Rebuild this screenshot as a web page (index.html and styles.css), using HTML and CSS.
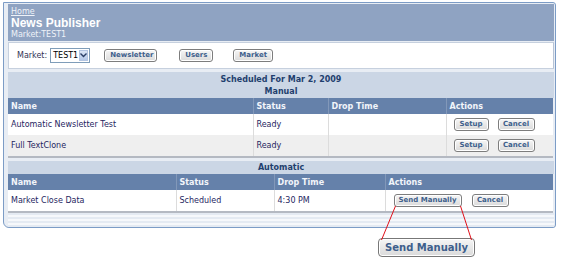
FILE: index.html
```html
<!DOCTYPE html>
<html lang="en">
<head>
  <meta charset="UTF-8">
  <meta name="viewport" content="width=device-width, initial-scale=1.0">
  <title>News Publisher</title>
  <link rel="stylesheet" href="styles.css">
</head>
<body>
  <div class="frame">
    <div class="masthead">
      <a class="home" href="#">Home</a>
      <div class="title">News Publisher</div>
      <div class="sub">Market:TEST1</div>
    </div>

    <div class="toolbar">
      <span class="label">Market:</span>
      <span class="select">
        <span class="select-value">TEST1</span>
        <span class="select-arrow">
          <svg width="7" height="5" viewBox="0 0 7 5"><path d="M0.5 0.5 L3.5 3.5 L6.5 0.5" fill="none" stroke="#2b3f66" stroke-width="1.4"/></svg>
        </span>
      </span>
      <button class="btn btn-newsletter">Newsletter</button>
      <button class="btn btn-users">Users</button>
      <button class="btn btn-market">Market</button>
    </div>

    <!-- manual drops -->
    <div class="block block-manual">
      <div class="block-head">
        <div>Scheduled For Mar 2, 2009</div>
        <div>Manual</div>
      </div>
      <table class="grid">
        <colgroup>
          <col style="width:245px"><col style="width:75px"><col style="width:118px"><col>
        </colgroup>
        <thead>
          <tr><th>Name</th><th>Status</th><th>Drop Time</th><th>Actions</th></tr>
        </thead>
        <tbody>
          <tr>
            <td>Automatic Newsletter Test</td>
            <td>Ready</td>
            <td></td>
            <td class="actions"><button class="btn">Setup</button><button class="btn btn-cancel">Cancel</button></td>
          </tr>
          <tr class="alt">
            <td>Full TextClone</td>
            <td>Ready</td>
            <td></td>
            <td class="actions"><button class="btn">Setup</button><button class="btn btn-cancel">Cancel</button></td>
          </tr>
        </tbody>
      </table>
    </div>

    <!-- automatic drops -->
    <div class="block block-auto">
      <div class="block-head">
        <div>Automatic</div>
      </div>
      <table class="grid">
        <colgroup>
          <col style="width:168px"><col style="width:98px"><col style="width:111px"><col>
        </colgroup>
        <thead>
          <tr><th>Name</th><th>Status</th><th>Drop Time</th><th>Actions</th></tr>
        </thead>
        <tbody>
          <tr>
            <td>Market Close Data</td>
            <td>Scheduled</td>
            <td>4:30 PM</td>
            <td class="actions"><button class="btn btn-send">Send Manually</button><button class="btn btn-cancel2">Cancel</button></td>
          </tr>
        </tbody>
      </table>
    </div>

    <div class="frame-foot"></div>
  </div>

  <div class="callout">
    <span class="btn btn-big">Send Manually</span>
  </div>

  <svg class="leader" width="561" height="260" viewBox="0 0 561 260">
    <line x1="395.5" y1="206" x2="381.5" y2="240" stroke="#e0101a" stroke-width="1"/>
    <line x1="460.5" y1="206" x2="471.5" y2="240" stroke="#e0101a" stroke-width="1"/>
  </svg>
</body>
</html>
```

FILE: styles.css
```css
body {
  margin: 0;
  padding: 0;
  background: #fff;
  font-family: "DejaVu Sans", Verdana, sans-serif;
  font-size: 8px;
  color: #262661;
  position: relative;
  width: 561px;
  height: 260px;
  overflow: hidden;
}
.frame {
  margin: 2px 0 0 3px;
  width: 546px;
  padding: 1px 1px 0 4px;
  border: 1px solid #7c9cc6;
  border-radius: 0 3px 3px 6px;
  background: #e8edf4;
}
.masthead {
  height: 37px;
  padding: 3px 3px 0 3px;
  box-sizing: border-box;
  background: #8fa3c2;
  color: #eef2f8;
}
.home {
  display: block;
  color: #eef2f8;
  text-decoration: underline;
  line-height: 9px;
}
.title {
  font-family: "Liberation Sans", Arial, sans-serif;
  font-weight: bold;
  font-size: 12px;
  color: #fff;
  line-height: 14px;
}
.sub {
  line-height: 10px;
}
.toolbar {
  display: flex;
  align-items: center;
  height: 25px;
  margin-top: 1px;
  padding-left: 8px;
  background: #fff;
  border: 1px solid #c6d0de;
  border-right-color: #b8c4d6;
}
.label {
  color: #333355;
}
.select {
  display: flex;
  align-items: stretch;
  margin-left: 3px;
  width: 40px;
  height: 15px;
  box-sizing: border-box;
  border: 1px solid #7f9db9;
  background: #fff;
}
.select-value {
  flex: 1;
  padding-left: 2px;
  line-height: 13px;
  color: #000;
}
.select-arrow {
  display: flex;
  align-items: center;
  justify-content: center;
  width: 11px;
  margin: 1px;
  background: linear-gradient(#dbe6f6, #b5c9e8);
  border: 1px solid #b3c5e2;
  box-sizing: border-box;
}
.btn {
  display: inline-block;
  font-family: "DejaVu Sans", Verdana, sans-serif;
  font-weight: bold;
  font-size: 7px;
  color: #3e5f8c;
  height: 13px;
  padding: 0 5px;
  line-height: 11px;
  border: 1px solid #7d7d7d;
  border-radius: 3px;
  background: linear-gradient(#f6f6f6, #dadada);
  box-shadow: inset 0 0 0 1px #fff;
  box-sizing: border-box;
  cursor: pointer;
}
.btn-newsletter { margin-left: 14px; width: 53px; }
.btn-users { margin-left: 22px; width: 34px; }
.btn-market { margin-left: 20px; width: 40px; }

.block {
  margin-top: 3px;
}
.block-head {
  background: #cbd6e5;
  color: #1f3f6e;
  font-weight: bold;
  text-align: center;
}
.block-manual .block-head {
  height: 26px;
  padding-top: 2px;
  box-sizing: border-box;
  line-height: 12px;
}
.block-auto .block-head {
  height: 13px;
  line-height: 13px;
}
.grid {
  width: 545px;
  border-collapse: collapse;
  table-layout: fixed;
  border-bottom: 2px solid #b4b9c2;
}
.grid th {
  background: #6581aa;
  color: #f2f5fa;
  text-align: left;
  height: 16px;
  padding: 0 3px;
  border-left: 1px solid #8298b9;
}
.grid td {
  height: 21px;
  padding: 0 3px;
  background: #fff;
  border-left: 1px solid #dcdcdc;
  white-space: nowrap;
}
.grid th:first-child,
.grid td:first-child {
  border-left: none;
}
.grid tr.alt td {
  background: #efefef;
}
.actions {
  padding-left: 7px !important;
}
.actions .btn {
  width: 35px;
  padding: 0;
}
.actions .btn-cancel {
  width: 37px;
  margin-left: 9px;
}
.actions .btn-send {
  width: 68px;
  margin-left: 1px;
}
.actions .btn-cancel2 {
  width: 37px;
  margin-left: 10px;
  padding: 0;
}
.frame-foot {
  height: 14px;
  background: repeating-linear-gradient(#e4eaf2 0, #e4eaf2 2px, #f6f8fb 2px, #f6f8fb 4px);
}
.callout {
  padding: 10px 0 0 378px;
}
.btn-big {
  width: 97px;
  height: 19px;
  padding: 0;
  font-size: 10px;
  line-height: 17px;
  text-align: center;
  color: #3e5f8c;
  border-color: #777;
  border-radius: 4px;
  cursor: default;
}
.leader {
  position: absolute;
  top: 0;
  left: 0;
  pointer-events: none;
}
```
